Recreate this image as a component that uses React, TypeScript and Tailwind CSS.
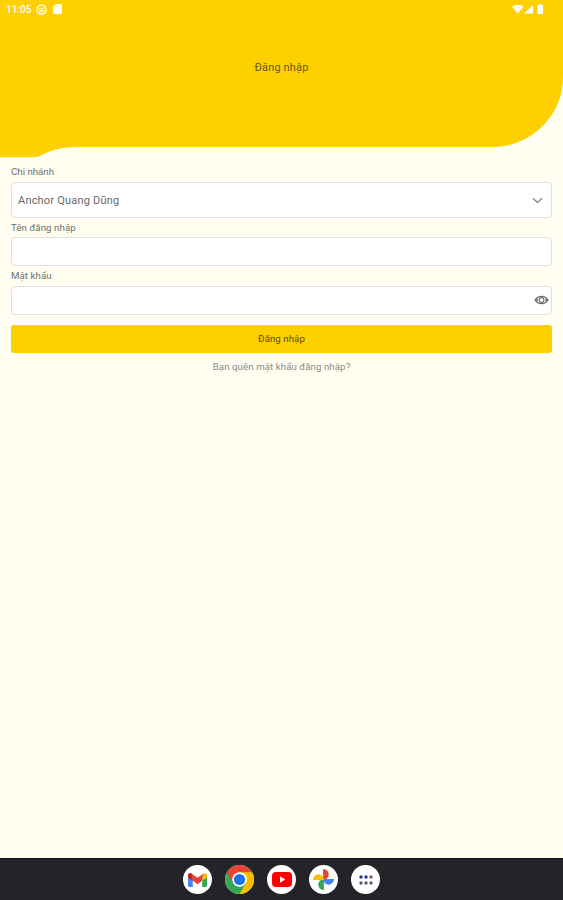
import React from 'react';

const inputClass = 'w-full rounded-[4px] border border-[#e0e0dc] bg-white outline-none';

const StatusBar: React.FC = () => (
  <div className="flex h-[18px] items-center justify-between pl-[6px] pr-[18px] text-white">
    <div className="flex items-center">
      <span className="w-[30px] pt-px text-[10px] leading-none font-medium">11:05</span>
      <svg className="h-[11px] w-[11px]" viewBox="0 0 11 11" fill="none" stroke="currentColor">
        <circle cx="5.5" cy="5.5" r="4.5" strokeWidth="1.4" />
        <path d="M3 4.3h5M3 6.3c1 2 4 2 5 0z" strokeWidth="1" />
      </svg>
      <svg className="ml-[6px] h-[10px] w-[9px]" viewBox="0 0 9 10" fill="currentColor">
        <path d="M3 0h5a1 1 0 0 1 1 1v8a1 1 0 0 1-1 1H1a1 1 0 0 1-1-1V3z" />
        <path d="M3.5 1.5v2M5.2 1.5v2M6.9 1.5v2" stroke="#ffe680" strokeWidth=".7" />
      </svg>
    </div>
    <svg className="h-[10px] w-[33px]" viewBox="0 0 33 10" fill="currentColor">
      <path d="M0 2.8C3.4 0 8.2 0 11.6 2.8L5.8 9.6z" />
      <path d="M21 1v8.6h-8.8z" />
      <path d="M25.5 1H27V0h2.5v1H31v9h-5.5z" />
    </svg>
  </div>
);

const Header: React.FC = () => (
  <header className="relative h-[158px] shrink-0">
    <svg className="absolute inset-0 h-[158px] w-full" viewBox="0 0 563 158" preserveAspectRatio="none">
      <path d="M0 0H563V77C563 116 531 147 492 147H78C61 147 51 150 42 155Q38 157.3 33 157.3H0Z" fill="#ffd000" />
    </svg>
    <div className="relative">
      <StatusBar />
      <h1 className="pt-[42px] text-center text-[11px] leading-4 tracking-[0.15px] text-[#65581c]">Đăng nhập</h1>
    </div>
  </header>
);

const LoginForm: React.FC = () => (
  <form className="flex flex-col px-[11px] pt-[6px] text-[#6f6f6c]">
    <label className="h-[18px] text-[9.7px] leading-[16px]">Chi nhánh</label>
    <button type="button" className={`${inputClass} flex h-[36px] items-center justify-between pl-[6px] pr-[8px]`}>
      <span className="pt-[2px] text-[11px] tracking-[0.2px] text-[#686868]">Anchor Quang Dũng</span>
      <svg className="h-[7px] w-[11px]" viewBox="0 0 12 7" fill="none" stroke="#808080" strokeWidth="1.3">
        <path d="M1 1l5 4.7L11 1" />
      </svg>
    </button>
    <label htmlFor="username" className="h-[19px] pt-[2px] text-[9.7px] leading-[16px] tracking-[0.07px]">Tên đăng nhập</label>
    <input id="username" className={`${inputClass} h-[29px] px-2 text-[11px]`} />
    <label htmlFor="password" className="h-[20px] pt-[2px] text-[9.7px] leading-[16px] tracking-[0.07px]">Mật khẩu</label>
    <div className={`${inputClass} flex h-[29px] items-center pr-[2px] pb-px`}>
      <input id="password" type="password" className="min-w-0 flex-1 px-2 text-[11px] outline-none" />
      <svg className="h-[10px] w-[15px]" viewBox="0 0 15 10" fill="none" stroke="#707070" strokeWidth="1.3">
        <path d="M1 5C4 .2 11 .2 14 5C11 9.8 4 9.8 1 5z" />
        <path d="M1 5l2.6-2.2v4.4zM14 5l-2.6-2.2v4.4z" fill="#707070" stroke="none" />
        <circle cx="7.5" cy="5" r="2.4" strokeWidth="1.1" />
      </svg>
    </div>
    <button type="button" className="mt-[10px] h-[28px] rounded-[3px] bg-[#ffd000] text-[9.7px] tracking-[0.05px] text-[#5a4d12]">
      Đăng nhập
    </button>
    <a className="pt-[6px] text-center text-[9.7px] leading-[16px] tracking-[0.07px] text-[#8c8c87]">Bạn quên mật khẩu đăng nhập?</a>
  </form>
);

const GmailIcon: React.FC = () => (
  <svg className="h-[14px] w-[19px]" viewBox="0 0 19 15" preserveAspectRatio="none">
    <path d="M0 3v10.5A1.5 1.5 0 0 0 1.5 15H4.8V6z" fill="#4285f4" />
    <path d="M19 3v10.5a1.5 1.5 0 0 1-1.5 1.5h-3.3V6z" fill="#34a853" />
    <path d="M14.2 1.5V8.3L19 4.8V2.2C19 .2 16.8-.6 15.4.6z" fill="#fbbc04" />
    <path d="M4.8 1.5V8.3L0 4.8V2.2C0 .2 2.2-.6 3.6.6z" fill="#c5221f" />
    <path d="M4.2 1l5.3 4.1L14.8 1l-.6 7.3-4.7 3.7-4.7-3.7z" fill="#ea4335" />
  </svg>
);

const ChromeIcon: React.FC = () => (
  <svg className="h-[29px] w-[29px]" viewBox="0 0 48 48">
    <circle cx="24" cy="24" r="24" fill="#34a853" />
    <path d="M3.2 12A24 24 0 0 1 44.8 12H24L13.6 30z" fill="#ea4335" />
    <path d="M44.8 12A24 24 0 0 1 24 48L34.4 30L24 12z" fill="#fbbc04" />
    <circle cx="24" cy="24" r="12" fill="#fff" />
    <circle cx="24" cy="24" r="9.3" fill="#1a73e8" />
  </svg>
);

const YoutubeIcon: React.FC = () => (
  <svg className="h-[15px] w-[20px]" viewBox="0 0 20 15">
    <rect width="20" height="15" rx="4" fill="#f00" />
    <path d="M8 4.3v6.4l5.3-3.2z" fill="#fff" />
  </svg>
);

const PhotosIcon: React.FC = () => (
  <svg className="h-[21px] w-[21px]" viewBox="0 0 20 20">
    <path d="M9.6 0a5.4 5.2 0 0 1 0 10.4z" fill="#ea4335" />
    <path d="M20 9.6a5.2 5.4 0 0 1-10.4 0z" fill="#4285f4" />
    <path d="M10.4 20a5.4 5.2 0 0 1 0-10.4z" fill="#34a853" />
    <path d="M0 10.4a5.2 5.4 0 0 1 10.4 0z" fill="#fbbc04" />
  </svg>
);

const AppsIcon: React.FC = () => (
  <svg className="h-[10px] w-[14px]" viewBox="0 0 14 10">
    <g fill="#28348a">
      <circle cx="2" cy="2" r="1.7" />
      <circle cx="7" cy="2" r="1.7" />
    </g>
    <circle cx="12" cy="2" r="1.7" fill="#8a5570" />
    <g fill="#5b5b75">
      <circle cx="2" cy="8" r="1.7" />
      <circle cx="7" cy="8" r="1.7" />
      <circle cx="12" cy="8" r="1.7" />
    </g>
  </svg>
);

const dockIcons = [GmailIcon, ChromeIcon, YoutubeIcon, PhotosIcon, AppsIcon];

const Dock: React.FC = () => (
  <nav className="mt-auto flex h-[42px] items-center justify-center gap-[13px] border-t border-[#111114] bg-[#232328]">
    {dockIcons.map((Icon, i) => (
      <span key={i} className="flex h-[29px] w-[29px] items-center justify-center rounded-full bg-white">
        <Icon />
      </span>
    ))}
  </nav>
);

const App: React.FC = () => (
  <div className="flex h-[900px] w-full flex-col overflow-hidden bg-[#fffef0] font-['Roboto',sans-serif]">
    <Header />
    <LoginForm />
    <Dock />
  </div>
);

export default App;
